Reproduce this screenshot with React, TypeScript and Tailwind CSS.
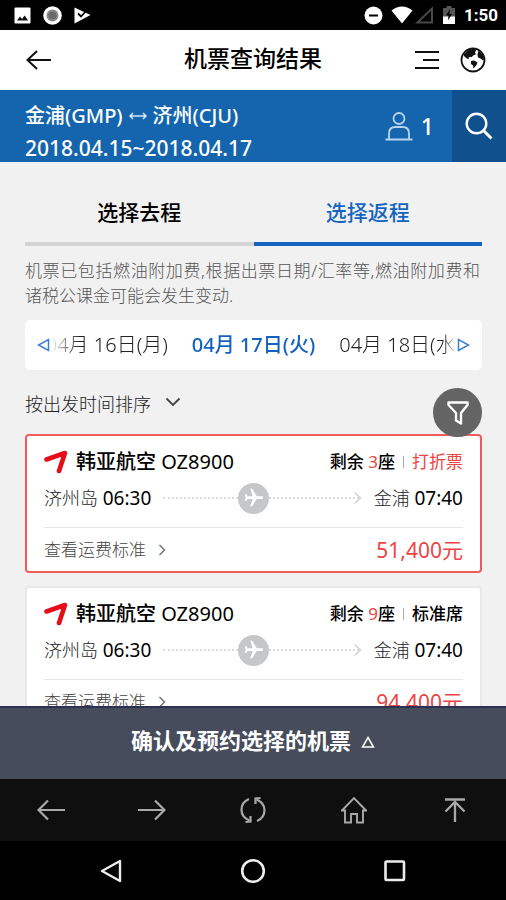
import { useState } from "react";
import { MdFlight } from "react-icons/md";

type TFlight = {
  id: number;
  airline: string;
  code: string;
  from: string;
  departure: string;
  to: string;
  arrival: string;
  seats: number;
  fare: string;
  discount: boolean;
  price: string;
};

const flights: TFlight[] = [
  {
    id: 1,
    airline: "韩亚航空",
    code: "OZ8900",
    from: "济州岛",
    departure: "06:30",
    to: "金浦",
    arrival: "07:40",
    seats: 3,
    fare: "打折票",
    discount: true,
    price: "51,400元",
  },
  {
    id: 2,
    airline: "韩亚航空",
    code: "OZ8900",
    from: "济州岛",
    departure: "06:30",
    to: "金浦",
    arrival: "07:40",
    seats: 9,
    fare: "标准席",
    discount: false,
    price: "94,400元",
  },
];

const dates = ["04月 16日(月)", "04月 17日(火)", "04月 18日(水)"];

const StatusBar = () => (
  <div className="flex h-[30px] shrink-0 items-center justify-between bg-black pl-3.5 pr-2 text-white">
    <div className="flex items-center gap-3">
      <svg width="17" height="17" viewBox="0 0 17 17">
        <rect x="0.5" y="0.5" width="16" height="16" rx="1" fill="#fff" />
        <path d="M3 13.5l3-4 2 2.4 2.6-3.4 3.6 5z" fill="#111" />
      </svg>
      <svg width="19" height="19" viewBox="0 0 19 19">
        <circle cx="9.5" cy="9.5" r="9.3" fill="#fff" />
        <circle cx="9.5" cy="9.5" r="6" fill="#8a8a8a" />
        <circle cx="9.5" cy="9.5" r="4" fill="#6a6a6a" />
      </svg>
      <svg width="17" height="17" viewBox="0 0 17 17">
        <path d="M0.5 0.5L16.5 8 0.5 16.5z" fill="#fff" />
        <path
          d="M4 6.500l3 3 6-6.500"
          fill="none"
          stroke="#000"
          strokeWidth="1.8"
        />
      </svg>
    </div>
    <div className="flex items-center">
      <svg width="19" height="19" viewBox="0 0 19 19">
        <circle cx="9.5" cy="9.5" r="9" fill="#fff" />
        <path d="M5 9.5h9" stroke="#000" strokeWidth="2" />
      </svg>
      <svg className="ml-2" width="22" height="18" viewBox="0 0 22 18">
        <path d="M0.5 4.5Q11-3.5 21.5 4.5L11 17.5z" fill="#fff" />
      </svg>
      <svg className="ml-0.5" width="19" height="18" viewBox="0 0 19 18">
        <path
          d="M2.5 16.5L17 2.5v14z"
          fill="none"
          stroke="#4a4a4a"
          strokeWidth="2"
        />
      </svg>
      <svg className="ml-2" width="14" height="20" viewBox="0 0 14 20">
        <path d="M1 3h3.5V1h5v2H13v9H1z" fill="#555" />
        <path d="M1 11.5h12V19H1z" fill="#fff" />
        <path d="M8 4l-4 6.500h2.500l-.5 5L10 9H7.500z" fill="#000" />
      </svg>
      <span className="ml-2 font-[Roboto] text-[17px] font-bold leading-6">
        1:50
      </span>
    </div>
  </div>
);

const Header = () => (
  <header className="grid h-[60px] shrink-0 grid-cols-[1fr_auto_1fr] items-center bg-white px-5 text-black">
    <button type="button" aria-label="返回" className="justify-self-start px-1.5">
      <svg width="26" height="22" viewBox="0 0 26 22" fill="none">
        <path d="M25 11H1.5M11 2L1.5 11l9.5 9" stroke="#111" strokeWidth="2" />
      </svg>
    </button>
    <h1 className="pb-1 text-[23px] font-medium leading-8">机票查询结果</h1>
    <div className="flex items-center gap-5 justify-self-end">
      <button type="button" aria-label="菜单">
        <svg width="26" height="20" viewBox="0 0 26 20">
          <path
            d="M1 2h24M9 10h16M1 18h24"
            stroke="#111"
            strokeWidth="2"
          />
        </svg>
      </button>
      <button type="button" aria-label="语言">
        <svg width="26" height="26" viewBox="0 0 26 26">
          <circle
            cx="13"
            cy="13"
            r="11.5"
            fill="none"
            stroke="#111"
            strokeWidth="1.8"
          />
          <path
            d="M4 7L8.500 3l5.500-1.300 2 1.500-1 2.500 1 1.500-2.500 1-2 2-1.500-.5-1.500 1 .5 1.500-2.500-1L4 9z"
            fill="#111"
          />
          <path d="M18.500 3.500l4 4 1.500 4.500-1 1.500-2.500-2-2.500-1-.5-3z" fill="#111" />
          <path d="M11 14l3-.5 3.500 2-1 2.500-3 3.500-.5-3-2-1.500z" fill="#111" />
        </svg>
      </button>
    </div>
  </header>
);

const SearchSummary = () => (
  <section className="flex h-[72px] shrink-0 bg-[#1565ae] text-white">
    <div className="flex flex-1 flex-col justify-center pl-[25px] pt-3">
      <p className="flex items-center gap-1.5 text-[20px] font-medium leading-8">
        <span>金浦(GMP)</span>
        <svg width="18" height="10" viewBox="0 0 18 10" fill="none">
          <path
            d="M1 5h16M4 2L1 5l3 3M14 2l3 3-3 3"
            stroke="#dbe8f5"
            strokeWidth="1.5"
          />
        </svg>
        <span>济州(CJU)</span>
      </p>
      <p className="text-[21px] font-medium leading-8">
        2018.04.15~2018.04.17
      </p>
    </div>
    <div className="flex items-center gap-2 pr-[18px]">
      <svg width="28" height="30" viewBox="0 0 28 30" fill="none">
        <g stroke="#b9d3ee" strokeWidth="1.8">
          <circle cx="14" cy="7.5" r="5.5" />
          <path d="M4 28.500v-6q0-6.500 6.500-6.500h7q6.500 0 6.500 6.500v6M0.500 28.500h27" />
        </g>
      </svg>
      <span className="text-[23px] font-medium leading-8">1</span>
    </div>
    <button
      type="button"
      aria-label="搜索"
      className="flex w-[54px] items-center justify-center bg-[#10508c]"
    >
      <svg width="28" height="28" viewBox="0 0 28 28" fill="none">
        <circle cx="11.5" cy="11.5" r="9.8" stroke="#fff" strokeWidth="2.4" />
        <path d="M18.5 18.5l8 8" stroke="#fff" strokeWidth="3" />
      </svg>
    </button>
  </section>
);

const DateStrip = () => (
  <div className="mt-3 flex h-[50px] items-center rounded-[5px] bg-white px-3">
    <button type="button" aria-label="前一天">
      <svg width="13" height="14" viewBox="0 0 13 14" fill="none">
        <path d="M11.5 1.5v11L1.5 7z" stroke="#3a80d0" strokeWidth="1.5" />
      </svg>
    </button>
    <div className="flex flex-1 justify-center gap-6 overflow-hidden [mask-image:linear-gradient(to_right,transparent,black_30px,black_calc(100%-14px),transparent)]">
      {dates.map((date, index) => (
        <button
          key={date}
          type="button"
          className={
            index === 1
              ? "shrink-0 whitespace-nowrap text-[20px] font-medium leading-8 text-[#1362c0]"
              : "shrink-0 whitespace-nowrap text-[20px] font-light leading-8 text-[#222]"
          }
        >
          {date}
        </button>
      ))}
    </div>
    <button type="button" aria-label="后一天">
      <svg width="13" height="14" viewBox="0 0 13 14" fill="none">
        <path d="M1.5 1.5v11L11.5 7z" stroke="#3a80d0" strokeWidth="1.5" />
      </svg>
    </button>
  </div>
);

const SortRow = () => (
  <div className="relative z-10 flex h-16 items-center">
    <div className="relative flex items-center">
      <select
        aria-label="排序方式"
        className="appearance-none bg-transparent pr-8 pt-1 text-[18px] font-light leading-8 text-[#222]"
      >
        <option>按出发时间排序</option>
      </select>
      <svg
        className="pointer-events-none absolute right-0.5"
        width="16"
        height="10"
        viewBox="0 0 16 10"
        fill="none"
      >
        <path d="M1.5 1.5L8 8l6.5-6.5" stroke="#444" strokeWidth="1.8" />
      </svg>
    </div>
    <button
      type="button"
      aria-label="筛选"
      className="absolute -bottom-[3px] right-0 flex size-[49px] items-center justify-center rounded-full bg-[#646464]"
    >
      <svg width="22" height="24" viewBox="0 0 22 24" fill="none">
        <path
          d="M1.5 1.5h19v2.5L14 12v10.5l-5-3V12L1.5 4z"
          stroke="#fff"
          strokeWidth="2.4"
          strokeLinejoin="round"
        />
      </svg>
    </button>
  </div>
);

const FlightCard = ({ flight }: { flight: TFlight }) => (
  <article
    className={
      flight.discount
        ? "rounded-[4px] border-2 border-[#ee5c5c] bg-white px-[17px] pt-2"
        : "rounded-[4px] border-2 border-[#e8e8e8] bg-white px-[17px] pt-2"
    }
  >
    <div className="flex h-9 items-center">
      <svg width="24" height="24" viewBox="0 0 24 24" fill="none">
        <path
          d="M2.5 9.5L21 3 15 21"
          stroke="#e60c18"
          strokeWidth="4.6"
          strokeLinecap="round"
          strokeLinejoin="round"
        />
      </svg>
      <h2 className="ml-2 flex-1 text-[20px] leading-8 text-black">
        <span className="font-medium">{flight.airline}</span> {flight.code}
      </h2>
      <p className="flex items-center text-[17px] font-medium leading-8 text-black">
        剩余&nbsp;
        <span className="font-normal text-[#ee4444]">{flight.seats}</span>座
        <span className="mx-2 h-3 w-px bg-[#aaa]" />
        <span className={flight.discount ? "font-normal text-[#ee4444]" : ""}>
          {flight.fare}
        </span>
      </p>
    </div>
    <div className="grid h-9 grid-cols-[1fr_auto_1fr] items-center text-[18px] font-light leading-8 text-[#222]">
      <div className="flex items-center gap-3">
        <p>
          {flight.from}{" "}
          <time className="text-[19px] font-normal text-black">
            {flight.departure}
          </time>
        </p>
        <span className="flex-1 border-t-2 border-dotted border-[#dcdcdc]" />
      </div>
      <span className="flex size-[31px] items-center justify-center rounded-full bg-[#c6c7c8]">
        <MdFlight className="size-[22px] rotate-90 text-white" />
      </span>
      <div className="flex items-center">
        <span className="flex-1 border-t-2 border-dotted border-[#dcdcdc]" />
        <svg
          className="-ml-1.5 mr-3"
          width="9"
          height="14"
          viewBox="0 0 9 14"
          fill="none"
        >
          <path d="M1.5 1.5L7.5 7l-6 5.5" stroke="#d4d4d4" strokeWidth="1.6" />
        </svg>
        <p>
          {flight.to}{" "}
          <time className="text-[19px] font-normal text-black">
            {flight.arrival}
          </time>
        </p>
      </div>
    </div>
    <div className="mt-[11px] flex h-11 items-center justify-between border-t border-[#e6e6e6]">
      <a
        href="#fare"
        className="flex items-center gap-3 text-[17px] font-light leading-8 text-[#444]"
      >
        查看运费标准
        <svg width="8" height="12" viewBox="0 0 8 12" fill="none">
          <path d="M1.5 1l5 5-5 5" stroke="#777" strokeWidth="1.5" />
        </svg>
      </a>
      <strong className="text-[21px] font-normal leading-8 text-[#ee4444]">
        {flight.price}
      </strong>
    </div>
  </article>
);

const BrowserBar = () => (
  <nav className="grid h-[62px] shrink-0 grid-cols-5 place-items-center bg-[#0f0f0f] text-[#a9a9a9]">
    <button type="button" aria-label="后退">
      <svg width="28" height="22" viewBox="0 0 28 22" fill="none">
        <path d="M28 11H2M11 1.5L1.5 11l9.5 9.5" stroke="currentColor" strokeWidth="2.2" />
      </svg>
    </button>
    <button type="button" aria-label="前进">
      <svg width="28" height="22" viewBox="0 0 28 22" fill="none">
        <path d="M0 11h26M17 1.5l9.5 9.5-9.5 9.5" stroke="currentColor" strokeWidth="2.2" />
      </svg>
    </button>
    <button type="button" aria-label="刷新">
      <svg width="28" height="28" viewBox="0 0 28 28" fill="none">
        <g stroke="currentColor" strokeWidth="2.2">
          <path d="M10 3Q2.5 6 2.5 14q0 7 8 10.5" />
          <path d="M11.5 20v5.5l-5 .5" />
          <path d="M18 25Q25.5 22 25.5 14q0-7-8-10.5" />
          <path d="M16.5 8V2.5l5-.5" />
        </g>
      </svg>
    </button>
    <button type="button" aria-label="主页">
      <svg width="28" height="28" viewBox="0 0 28 28" fill="none">
        <path
          d="M1.5 15L14 2l12.5 13M1 14.5h4v12h6V18h6v8.5h6v-12h4"
          stroke="currentColor"
          strokeWidth="1.9"
        />
      </svg>
    </button>
    <button type="button" aria-label="回到顶部">
      <svg width="22" height="26" viewBox="0 0 22 26" fill="none">
        <path
          d="M1 2.5h20M11 25V5M1.5 14.5L11 5l9.5 9.5"
          stroke="currentColor"
          strokeWidth="2.3"
        />
      </svg>
    </button>
  </nav>
);

const SystemBar = () => (
  <nav className="grid h-[59px] shrink-0 grid-cols-3 place-items-center bg-black px-10 text-[#ececec]">
    <button type="button" aria-label="系统返回">
      <svg width="22" height="24" viewBox="0 0 22 24" fill="none">
        <path
          d="M20 2v20L2 12z"
          stroke="currentColor"
          strokeWidth="2.4"
          strokeLinejoin="round"
        />
      </svg>
    </button>
    <button type="button" aria-label="系统主屏幕">
      <svg width="26" height="26" viewBox="0 0 26 26" fill="none">
        <circle cx="13" cy="13" r="10.8" stroke="currentColor" strokeWidth="2.6" />
      </svg>
    </button>
    <button type="button" aria-label="最近应用">
      <svg width="22" height="22" viewBox="0 0 22 22" fill="none">
        <rect
          x="1.5"
          y="1.5"
          width="18.5"
          height="18.5"
          rx="1"
          stroke="currentColor"
          strokeWidth="2.6"
        />
      </svg>
    </button>
  </nav>
);

const App = () => {
  const [tab, setTab] = useState<"outbound" | "inbound">("inbound");

  const active =
    "h-[84px] flex-1 border-b-4 border-[#1565c0] pt-5 text-[21px] font-medium leading-8 text-[#1565c0]";
  const inactive =
    "h-[84px] flex-1 border-b-4 border-[#d4d4d4] pt-5 text-[21px] font-medium leading-8 text-black";

  return (
    <div className="flex h-screen flex-col overflow-hidden bg-[#f1f1f1] font-['Noto_Sans','Noto_Sans_CJK_SC',sans-serif]">
      <StatusBar />
      <Header />
      <SearchSummary />
      <main className="min-h-0 flex-1 overflow-hidden pl-[25px] pr-6">
        <div className="flex">
          <button
            type="button"
            className={tab === "outbound" ? active : inactive}
            onClick={() => setTab("outbound")}
          >
            选择去程
          </button>
          <button
            type="button"
            className={tab === "inbound" ? active : inactive}
            onClick={() => setTab("inbound")}
          >
            选择返程
          </button>
        </div>
        <p className="mt-3 pr-0.5 text-justify text-[17px] font-light leading-[25px] text-[#555]">
          机票已包括燃油附加费,根据出票日期/汇率等,燃油附加费和诸税公课金可能会发生变动.
        </p>
        <DateStrip />
        <SortRow />
        <div className="flex flex-col gap-[13px]">
          {flights.map((flight) => (
            <FlightCard key={flight.id} flight={flight} />
          ))}
        </div>
      </main>
      <button
        type="button"
        className="flex h-[73px] shrink-0 items-center justify-center gap-2.5 border-t-2 border-[#2c3350] bg-[#464c5b] pb-2 text-[22px] font-bold leading-8 text-white"
      >
        确认及预约选择的机票
        <svg className="mt-1" width="14" height="12" viewBox="0 0 14 12" fill="none">
          <path d="M7 1.5l5.5 9.5h-11z" stroke="#fff" strokeWidth="1.5" />
        </svg>
      </button>
      <BrowserBar />
      <SystemBar />
    </div>
  );
};

export default App;
